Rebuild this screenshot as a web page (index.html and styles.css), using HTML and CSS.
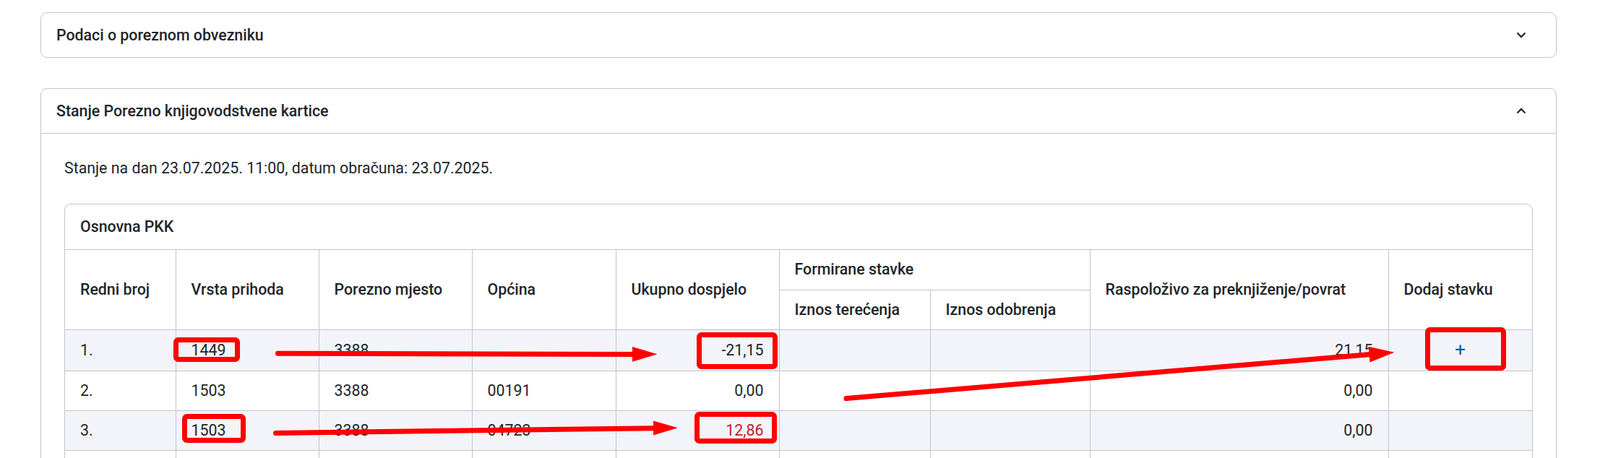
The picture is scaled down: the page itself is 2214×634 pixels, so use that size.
FILE: index.html
```html
<!DOCTYPE html>
<html lang="hr">
<head>
<meta charset="utf-8">
<title>Stanje Porezno knjigovodstvene kartice</title>
<link rel="stylesheet" href="styles.css">
</head>
<body>
<main class="page">
  <section class="panel">
    <header class="panel-head">
      <h2 class="panel-title">Podaci o poreznom obvezniku</h2>
      <svg class="chev" viewBox="0 0 14 9" aria-hidden="true"><path d="M1.5 1.5 7 7 12.5 1.5"/></svg>
    </header>
  </section>

  <section class="panel panel-open">
    <header class="panel-head">
      <h2 class="panel-title">Stanje Porezno knjigovodstvene kartice</h2>
      <svg class="chev" viewBox="0 0 14 9" aria-hidden="true"><path d="M1.5 7.5 7 2 12.5 7.5"/></svg>
    </header>
    <div class="panel-body">
      <p class="as-of">Stanje na dan 23.07.2025. 11:00, datum obračuna: 23.07.2025.</p>
      <div class="subcard">
        <div class="subcard-head">Osnovna PKK</div>
        <table class="pkk">
          <colgroup>
            <col class="c-rb"><col class="c-vp"><col class="c-pm"><col class="c-op"><col class="c-ud">
            <col class="c-it"><col class="c-io"><col class="c-ra"><col class="c-ds">
          </colgroup>
          <thead>
            <tr>
              <th rowspan="2">Redni broj</th>
              <th rowspan="2">Vrsta prihoda</th>
              <th rowspan="2">Porezno mjesto</th>
              <th rowspan="2">Općina</th>
              <th rowspan="2">Ukupno dospjelo</th>
              <th colspan="2">Formirane stavke</th>
              <th rowspan="2">Raspoloživo za preknjiženje/povrat</th>
              <th rowspan="2">Dodaj stavku</th>
            </tr>
            <tr>
              <th>Iznos terećenja</th>
              <th>Iznos odobrenja</th>
            </tr>
          </thead>
          <tbody>
            <tr>
              <td>1.</td><td>1449</td><td>3388</td><td></td>
              <td class="num">-21,15</td><td class="num"></td><td class="num"></td>
              <td class="num">21,15</td>
              <td class="act"><button class="add" type="button">+</button></td>
            </tr>
            <tr>
              <td>2.</td><td>1503</td><td>3388</td><td>00191</td>
              <td class="num">0,00</td><td class="num"></td><td class="num"></td>
              <td class="num">0,00</td>
              <td class="act"></td>
            </tr>
            <tr>
              <td>3.</td><td>1503</td><td>3388</td><td>04723</td>
              <td class="num neg">12,86</td><td class="num"></td><td class="num"></td>
              <td class="num">0,00</td>
              <td class="act"></td>
            </tr>
            <tr>
              <td></td><td></td><td></td><td></td>
              <td class="num"></td><td class="num"></td><td class="num"></td>
              <td class="num"></td>
              <td class="act"></td>
            </tr>
          </tbody>
        </table>
      </div>
    </div>
  </section>
</main>

<svg class="annot" viewBox="0 0 2214 634" aria-hidden="true">
  <g class="box">
    <rect x="243.5" y="470.5" width="85" height="27" rx="3"/>
    <rect x="967.5" y="463.5" width="105" height="44" rx="3"/>
    <rect x="255.5" y="576.5" width="81" height="33" rx="3"/>
    <rect x="964.5" y="573.5" width="107" height="37" rx="3"/>
    <rect x="1975.5" y="456.5" width="105" height="53" rx="3"/>
  </g>
  <g class="line">
    <path d="M384.5 489.3 L878 490.4"/>
    <path d="M381.5 599.4 L906 592.7"/>
    <path d="M1171 551.6 L1897 490.4"/>
  </g>
  <g class="head">
    <polygon points="875,480 909.5,490.3 875,500.7"/>
    <polygon points="904,582.4 938,592.3 904,602.6"/>
    <polygon points="1893.7,479.7 1929.5,487.7 1895.5,501.6"/>
  </g>
</svg>
</body>
</html>
```

FILE: styles.css
```css
* {
  box-sizing: border-box;
}

html,
body {
  margin: 0;
  height: 100%;
}

body {
  position: relative;
  overflow: hidden;
  background: #ffffff;
  color: #212529;
  font-family: Roboto, "Liberation Sans", Arial, sans-serif;
  font-size: 21.33px;
  line-height: 32px;
}

.page {
  padding: 17px 60px 0 56px;
}

.panel {
  border: 1px solid #c4c4ca;
  border-radius: 9px;
  background: #ffffff;
}

.panel + .panel {
  margin-top: 42px;
}

.panel-head {
  display: flex;
  align-items: center;
  justify-content: space-between;
  padding: 14.5px 41px 14.5px 21px;
}

.panel-open .panel-head {
  border-bottom: 1px solid #c4c4ca;
}

.panel-title {
  margin: 0;
  font-size: 21.33px;
  font-weight: 500;
  line-height: 32px;
}

.chev {
  width: 14px;
  height: 9px;
  fill: none;
  stroke: #2b2b2b;
  stroke-width: 2.3;
}

.panel-body {
  padding: 32px;
}

.as-of {
  margin: 0 0 33px;
}

.subcard {
  border: 1px solid #c4c4ca;
  border-radius: 9px;
  overflow: hidden;
}

.subcard-head {
  padding: 15px 21px;
  font-weight: 500;
  border-bottom: 1px solid #c4c4ca;
}

.pkk {
  width: 100%;
  border-collapse: collapse;
  border-style: hidden;
  table-layout: fixed;
}

.c-rb { width: 153px; }
.c-vp { width: 198px; }
.c-pm { width: 212px; }
.c-op { width: 199px; }
.c-ud { width: 226px; }
.c-it { width: 209px; }
.c-io { width: 221px; }
.c-ra { width: 413px; }
.c-ds { width: 199px; }

.pkk th,
.pkk td {
  border: 1px solid #c4c4ca;
  padding: 11px 21px;
  height: 55px;
  text-align: left;
  vertical-align: middle;
  white-space: nowrap;
}

.pkk th {
  font-weight: 500;
}

.pkk tbody tr:nth-child(odd) td {
  background: #f3f4f9;
}

.pkk td.num {
  text-align: right;
}

.pkk td.neg {
  color: #c41e2a;
}

.pkk td.act {
  text-align: center;
}

.add {
  padding: 0;
  border: 0;
  background: none;
  color: #1b5c98;
  font-family: Roboto, "Liberation Sans", Arial, sans-serif;
  font-size: 26px;
  line-height: 32px;
  cursor: pointer;
}

.annot {
  position: absolute;
  top: 0;
  left: 0;
  width: 2214px;
  height: 634px;
  pointer-events: none;
}

.annot .box rect {
  fill: none;
  stroke: #ff0000;
  stroke-width: 7;
}

.annot .line path {
  fill: none;
  stroke: #ff0000;
  stroke-width: 7;
  stroke-linecap: round;
}

.annot .head polygon {
  fill: #ff0000;
}
```
